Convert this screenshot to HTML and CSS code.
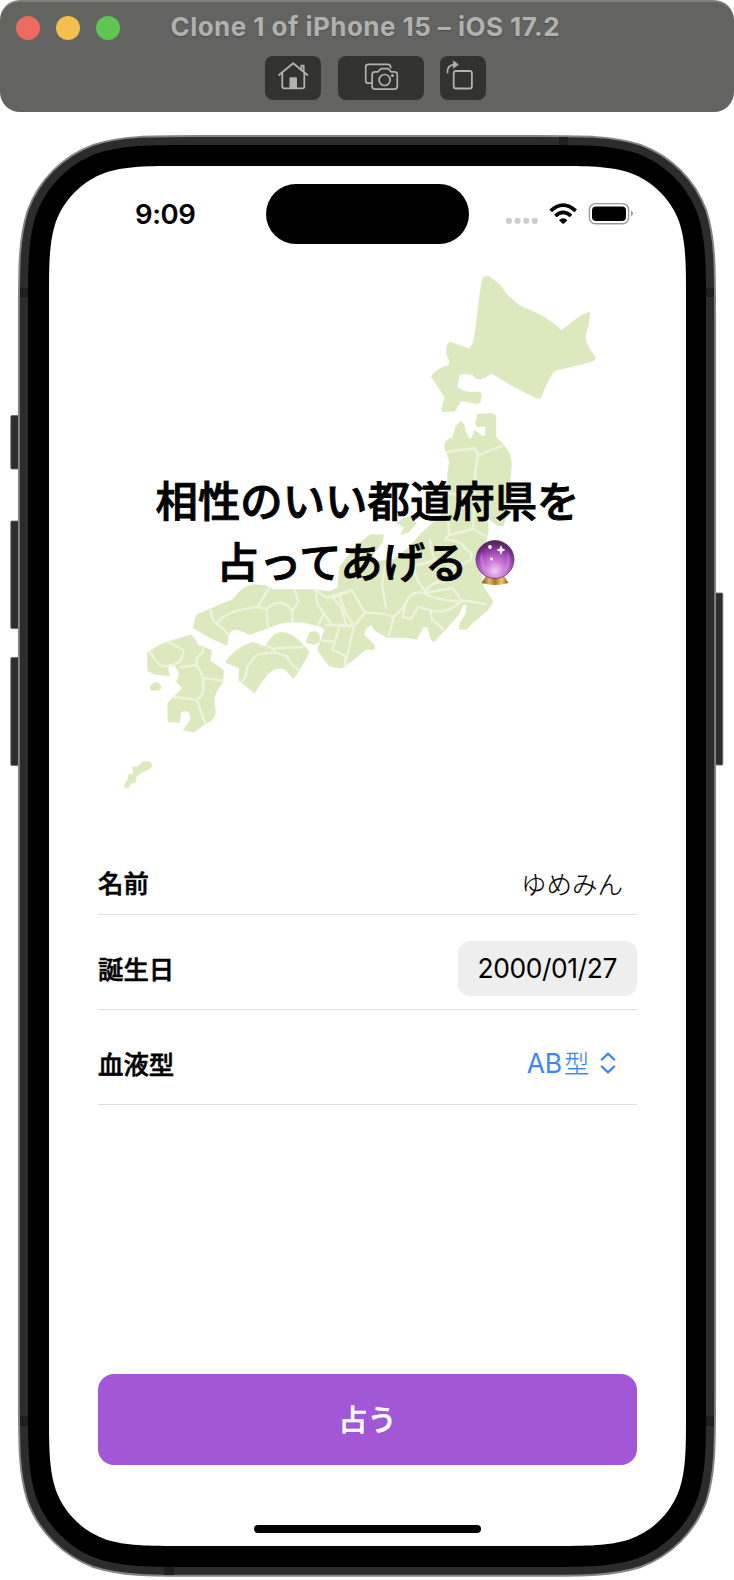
FILE: index.html
```html
<!DOCTYPE html>
<html lang="ja">
<head>
<meta charset="utf-8">
<title>Clone 1 of iPhone 15 – iOS 17.2</title>
<link rel="stylesheet" href="styles.css">
</head>
<body>
<header class="window-bar">
  <div class="title-row">
    <div class="lights"><i class="light red"></i><i class="light yellow"></i><i class="light green"></i></div>
    <h1 class="window-title">Clone 1 of iPhone 15 – iOS 17.2</h1>
  </div>
  <nav class="tools">
    <button class="tool home" aria-label="Home">
      <svg width="56" height="44" viewBox="0 0 56 44" fill="none" stroke="#b1b1af" stroke-width="1.8" stroke-linecap="round" stroke-linejoin="round"><path d="M14 19 28.2 7.2 42.4 19M17.3 17.2V30.5Q17.3 32.4 19.2 32.4H37.4Q39.3 32.4 39.3 30.5V17.2M36.3 13.2V9.7H38.7V15.5"/><path d="M24.5 32V22.5Q24.5 21.3 25.7 21.3H30.8Q32 21.3 32 22.5V32Z" fill="#b1b1af" stroke="none"/></svg>
    </button>
    <button class="tool camera" aria-label="Screenshot">
      <svg width="86" height="44" viewBox="0 0 86 44" fill="none" stroke="#b1b1af" stroke-width="1.7" stroke-linecap="round" stroke-linejoin="round"><path d="M33.5 27.2H30.5Q27.7 27.2 27.7 24.4V11Q27.7 8.3 30.5 8.3H50Q52.5 8.3 52.8 11.6"/><path d="M37 15.8H40.1L42 13.5Q42.7 12.7 43.8 12.7H49.3Q50.4 12.7 51.1 13.5L53 15.8H56.4Q59.3 15.8 59.3 18.7V30.3Q59.3 33.2 56.4 33.2H37Q34.1 33.2 34.1 30.3V18.7Q34.1 15.8 37 15.8Z"/><circle cx="46.6" cy="24" r="5.5"/><circle cx="54.4" cy="19.6" r="1.5" fill="#b1b1af" stroke="none"/></svg>
    </button>
    <button class="tool rotate" aria-label="Rotate">
      <svg width="46" height="44" viewBox="0 0 46 44" fill="none" stroke="#b1b1af" stroke-width="1.8" stroke-linecap="round" stroke-linejoin="round"><rect x="13.7" y="15" width="18.2" height="17.5" rx="2.3"/><path d="M7.5 16.5C7 11.5 9.5 9 14.5 8.6"/><path d="M13.7 5.3 18.3 8.6 13.7 12Z" fill="#b1b1af" stroke-width=".8"/></svg>
    </button>
  </nav>
</header>

<main class="device">
  <svg class="device-frame" width="734" height="1468" viewBox="0 112 734 1468" aria-hidden="true">
    <g fill="#2c2d2c" stroke="#6a6a6a" stroke-width=".8">
      <rect x="10.8" y="415.5" width="10" height="53.5" rx="1"/><rect x="10.8" y="521" width="10" height="107.5" rx="1"/><rect x="10.8" y="657.5" width="10" height="108" rx="1"/><rect x="713" y="593" width="9.8" height="172" rx="1"/>
    </g>
    <path fill="#2c2c2c" stroke="#858585" stroke-width="1.9" d="M199.3 136H534.7c52 0 77.9 0 105.9 8.8c30.5 11.2 54.5 35.2 65.7 65.7c8.8 28 8.8 53.9 8.8 105.9V1395.4c0 52 0 77.9-8.8 105.9c-11.2 30.5-35.2 54.5-65.7 65.7c-28 8.8-53.9 8.8-105.9 8.8H199.3c-52 0-77.9 0-105.9-8.8c-30.5-11.2-54.5-35.2-65.7-65.7c-8.8-28-8.8-53.9-8.8-105.9V316.4c0-52 0-77.9 8.8-105.9c11.2-30.5 35.2-54.5 65.7-65.7c28-8.8 53.9-8.8 105.9-8.8Z"/>
    <path fill="#1f1f1f" d="M559 137h9v9h-9zM164 1566h10v9h-10zM20 288h9v9h-9zM705 288h9v9h-9zM20 1416h9v10h-9zM705 1416h9v10h-9z"/>
    <path d="M196 145H538c48.3 0 72.5 0 98.5 8.2c28.5 10.4 50.9 32.8 61.3 61.3c8.2 26 8.2 50.2 8.2 98.5V1399c0 48.3 0 72.5-8.2 98.5c-10.4 28.5-32.8 50.9-61.3 61.3c-26 8.2-50.2 8.2-98.5 8.2H196c-48.3 0-72.5 0-98.5-8.2c-28.5-10.4-50.9-32.8-61.3-61.3c-8.2-26-8.2-50.2-8.2-98.5V313c0-48.3 0-72.5 8.2-98.5c10.4-28.5 32.8-50.9 61.3-61.3c26-8.2 50.2-8.2 98.5-8.2Z"/>
    <path fill="#fff" d="M185 166H550c39.1 0 58.7 0 79.8 6.7c23 8.3 41.2 26.5 49.5 49.5c6.7 21.1 6.7 40.7 6.7 79.8V1410c0 39.1 0 58.7-6.7 79.8c-8.3 23-26.5 41.2-49.5 49.5c-21.1 6.7-40.7 6.7-79.8 6.7H185c-39.1 0-58.7 0-79.8-6.7c-23-8.3-41.2-26.5-49.5-49.5c-6.7-21.1-6.7-40.7-6.7-79.8V302c0-39.1 0-58.7 6.7-79.8c8.3-23 26.5-41.2 49.5-49.5c21.1-6.7 40.7-6.7 79.8-6.7Z"/>
  </svg>

  <div class="screen">
    <div class="status">
      <span class="time">9:09</span>
      <div class="island"></div>
      <svg class="status-icons" width="130" height="24" viewBox="505 201 130 24">
        <g fill="#ccc"><rect x="506" y="217" width="5.8" height="5.8" rx="1.8"/><rect x="514.7" y="217" width="5.8" height="5.8" rx="1.8"/><rect x="523.3" y="217" width="5.8" height="5.8" rx="1.8"/><rect x="532" y="217" width="5.8" height="5.8" rx="1.8"/></g>
        <g fill="none" stroke="#000" stroke-width="3.7"><path d="M550.7 209.9Q563.2 198.3 575.7 209.9"/><path d="M555.4 215Q563.2 207.8 571 215"/></g>
        <path d="M559 219.2Q563.2 215.4 567.4 219.2L563.9 222.5Q563.2 223.1 562.5 222.5Z"/>
        <rect x="589.4" y="202.6" width="39.2" height="20.2" rx="6" fill="none" stroke="#999" stroke-width="1.4"/><rect x="592" y="205.4" width="34" height="14.6" rx="4"/><path fill="#999" d="M631 209.6q2 .8 2 3t-2 3Z"/>
      </svg>
    </div>

    <section class="hero">
      <svg class="map" width="500" height="540" viewBox="110 260 500 540" aria-hidden="true">
        <g fill="#dce9bf" stroke="#dce9bf" stroke-width="1.5" stroke-linejoin="round">
          <path transform="translate(400 260) scale(.33333)" d="M248 55Q258 42 274 54L298 72L323 106L360 138Q382 146 405 157Q448 176 484 211Q510 192 535 172Q557 158 570 156L566 190L557 225Q555 246 570 269L588 294Q583 304 560 309L465 332Q455 341 450 353L434 384L424 410Q415 421 402 411L344 382L274 340L255 353Q227 366 218 344Q195 339 178 344L172 380Q185 393 205 396L240 396L245 405L241 427L230 431L184 422L164 454L126 455L126 441L135 413L113 379L94 350Q105 331 130 321L148 315L149 304L138 279L141 256L149 245L207 266Q222 255 225 219L232 165L237 117Z"/>
          <path d="M460.7 421.7Q464 424 465 431L468 437Q471 440 472 438L475 431L484 437.5L486 434V426H477L476 423L478 414.5L493 414L495.5 416V437L503 445Q511 453 511 466Q510 480 507 491Q503 505 507 511L503 525Q498 527 493 521L487 518L488 531L484 548L480 565L483 587L492.7 602L487 610L473 622L466 629H460L460 624L467 613V604H463L458 615L447 627L434 641Q431 640 430.5 637L428 627L423 626L416.7 639L405 636.7L387 637L375 630L371.5 624L365 629L363.5 635L374 645L374 649H365L355 658L343 667Q335 668 329 665L318 650L325 630L322 626.5L303 621.7Q290 621 280 623L250 634L238 629Q230 629 228 635L226.7 645L210 637L193.5 627.7L197 615L233 600Q243 586 254 585L265 586L273 590H313L330 592L338 588L340 567L355 548L370 535L383 535L382 542L372 555L375 562L393 560L410 547L423 532L437 520L443 513L448 499V474L450 461L445 448Q444 440 453 438L456 427Z"/>
          <path d="M398 523L403 519L409 517L416 523L408 532L401 534L405 527Z"/>
          <path d="M310 633Q317 630 319 635V642L313 644L306.5 642Z"/>
          <path transform="translate(110 560) scale(.33333)" d="M112 278Q150 250 190 240L242 224Q260 238 263 255L305 270L301 303L341 330L338 370Q324 380 313 413L316 460L313 470Q306 484 285 492L252 517L219 511L240 483L241 465Q237 451 222 453Q211 456 211 462L210 487L174 486L173 429L217 384L199 365L207 347Q204 321 188 312Q174 311 174 324L178 348L132 343L113 332Z"/>
          <path transform="translate(110 560) scale(.33333)" d="M349 302Q371 267 428 246L465 260L480 238Q495 217 515 217Q550 218 582 258L599 276L585 300L567 332L550 357L525 328Q490 317 465 353Q446 375 434 400L386 361L388 324L349 309ZM120 380Q127 365 145 368Q158 375 150 389Q137 392 123 391ZM98 605Q111 601 121 607Q130 615 121 625L92 640L79 650L76 667L62 671L55 683L44 682L45 671L54 657V646L70 640L68 620L81 622Z"/>
        </g>
        <g fill="none" stroke="#edf3dc" stroke-width="2.4" stroke-linejoin="round" stroke-linecap="round">
          <path d="M447 452L475 448L478 455L502 446M478 455L475 473V493M448 493L473 498L488 493M475 493L473 529L450 535M448 500L449 535L445 540M473 529L485 536"/>
          <path d="M448 540Q462 541 465 548Q473 552 471 560L460 565Q450 567 452 574L445 582M445 582Q432 580 424 593M430 540Q431 555 436 560L414 566Q416 580 421 585L426 593Q440 590 453 588L461 600L485 604M424 593Q410 590 405 605L403 617L411 619L418 607L430 610Q442 614 452 608L462 601M424 593Q434 600 458 601M430 610L432 619L443 629M405 605L394 617L389 635M394 617Q380 612 365 613Q360 605 352 590L339 594L327 598L315 590M385 566L382 585L386 608M365 613L354 626L345 665M354 626Q340 624 326 625M339 594L345 612L354 626"/>
          <path stroke-width="7" transform="translate(110 560) scale(.33333)" d="M303 152Q302 178 320 190L355 222M320 190L338 172Q376 147 442 141L475 88M442 141L469 147L474 200M469 147Q499 122 520 130Q537 137 547 151V185M547 151L566 126L554 92M618 92L622 131L642 160L625 196M642 160L667 196L720 200M667 112L691 139L710 196M687 205L667 270L707 287L704 320M667 243H640M667 112L720 94M177 247L220 270Q221 306 187 315M120 277L140 306Q157 325 177 316M282 259L277 279Q255 290 261 316L277 347L281 385L274 408L260 420L195 411M261 316L211 321M282 354L338 362M260 420L286 491M473 258Q495 268 497 277Q440 279 435 291L411 320Q411 352 396 364M497 264L577 262M497 277L532 289Q537 310 567 331"/>
        </g>
      </svg>
      <h2 class="headline">相性のいい都道府県を<br>占ってあげる<svg class="crystal" role="img" aria-label="🔮" width="44" height="48" viewBox="0 0 44 48">
        <defs><radialGradient id="ball" cx=".5" cy=".8" r=".78"><stop offset="0" stop-color="#efd0f4"/><stop offset=".3" stop-color="#cf82da"/><stop offset=".62" stop-color="#a349b8"/><stop offset=".85" stop-color="#6c2b7a"/><stop offset="1" stop-color="#4e2558"/></radialGradient><linearGradient id="base"><stop stop-color="#795015"/><stop offset=".3" stop-color="#e3bc65"/><stop offset=".5" stop-color="#a77526"/><stop offset=".75" stop-color="#f0cb6d"/><stop offset="1" stop-color="#855713"/></linearGradient></defs>
        <path d="M13 37Q22 41 31 37L35.5 44Q22 48 8.5 44Z" fill="url(#base)"/><circle cx="22" cy="20.5" r="19" fill="url(#ball)" stroke="#62356f" stroke-width=".8"/><path d="M10 31Q5 22 9 13Q10 25 15 34ZM34 31Q40 21 34 12Q36 24 29 34Z" fill="#e1aaf0" opacity=".35"/><path d="m28 6 1.2 3.3L32.5 11l-3.3 1.4L28 16l-1.4-3.6L23.3 11l3.3-1.5Z" fill="#fff"/><circle cx="17" cy="8" r="1.9" fill="#fff"/><circle cx="18.5" cy="20" r="1.5" fill="#fff"/>
      </svg></h2>
    </section>

    <form class="form">
      <div class="field name"><span class="label">名前</span><span class="value">ゆめみん</span></div>
      <div class="field"><span class="label">誕生日</span><span class="date">2000/01/27</span></div>
      <div class="field"><span class="label">血液型</span><span class="blood"><span class="blood-type">AB<span class="kanji">型</span></span><svg width="16" height="24" viewBox="0 0 16 24" fill="none" stroke="#3d85f7" stroke-width="2.3" stroke-linecap="round" stroke-linejoin="round"><path d="M1.8 8.5 8 2.6 14.2 8.5M1.8 15.5 8 21.4 14.2 15.5"/></svg></span></div>
    </form>
    <button class="submit">占う</button>
    <div class="home-indicator"></div>
  </div>
</main>
</body>
</html>
```
FILE: styles.css
```css
* { box-sizing: border-box; }
body { margin: 0; width: 734px; height: 1580px; overflow: hidden; background: #fff; color: #000; font-family: Inter, "Noto Sans CJK JP", sans-serif; }
button { border: 0; padding: 0; font-family: inherit; }
.window-bar { height: 112px; border-radius: 20px; background: #636361; border-top: 2px solid #81817f; }
.title-row { display: grid; grid-template-columns: 170.5px 1fr; align-items: center; height: 52px; }
.lights { display: flex; gap: 16px; padding-left: 16px; }
.light { width: 24px; height: 24px; border-radius: 50%; }
.red { background: #ed6a5e; }
.yellow { background: #f5bf4f; }
.green { background: #61c554; }
.window-title { margin: 0 0 2px; font-size: 26px; line-height: 30px; font-weight: 700; letter-spacing: .46px; color: #b1b1af; white-space: nowrap; text-shadow: 0 1px 1px #4b4b49; }
.tools { display: flex; padding: 2px 0 0 265px; }
.tool { height: 44px; border-radius: 8px; background: #323230; }
.tool svg { display: block; }
.home { width: 56px; }
.camera { width: 86px; margin-left: 17px; }
.rotate { width: 46px; margin-left: 16px; }
.device { position: relative; height: 1468px; padding: 54px 48px 34px 49px; }
.device-frame { position: absolute; inset: 0; }
.screen { position: relative; display: flex; flex-direction: column; align-items: center; height: 1380px; padding: 18px 49px 13px; }
.status { display: grid; grid-template-columns: 168px 203px 168px; align-items: center; height: 60px; flex: none; }
.time { justify-self: start; padding-left: 37px; font-size: 27.5px; font-weight: 600; letter-spacing: -.4px; }
.island { width: 203px; height: 60px; border-radius: 30px; background: #000; }
.status-icons { margin-left: 36px; }
.hero { display: grid; justify-items: center; align-items: center; width: 539px; height: 540px; margin-top: 16px; flex: none; }
.map, .headline { grid-area: 1 / 1; }
.map { justify-self: start; margin-left: 12px; }
.headline { position: relative; margin: 4px 0 0; font-size: 42.4px; line-height: 61px; font-weight: 500; -webkit-text-stroke: .9px; text-align: center; white-space: nowrap; }
.crystal { display: inline-block; margin: 0 1px 0 6px; vertical-align: -9px; }
.form { width: 539px; margin-top: 54px; }
.field { display: flex; justify-content: space-between; align-items: center; height: 95px; padding-top: 12px; border-bottom: 1px solid #dedede; }
.name { height: 61px; padding: 0 0 4px; }
.label { font-size: 25.4px; font-weight: 500; -webkit-text-stroke: .55px; }
.value { padding-right: 14px; font-size: 25.5px; font-weight: 300; -webkit-text-stroke: .15px; }
.date { display: grid; place-items: center; width: 179.5px; height: 55px; border-radius: 12px; background: #eee; font-size: 26.4px; letter-spacing: -.4px; }
.blood { display: flex; align-items: center; gap: 11px; padding-right: 21px; color: #3d85f7; font-size: 26.4px; }
.blood-type { padding-bottom: 2px; letter-spacing: -.2px; }
.kanji { margin-left: 2px; font-size: 25.3px; font-weight: 300; -webkit-text-stroke: .15px; }
.submit { width: 539px; height: 91px; margin-top: 269px; padding-bottom: 4px; border-radius: 16px; background: #a257d7; color: #fff; font-size: 29px; font-weight: 500; -webkit-text-stroke: .5px; flex: none; }
.home-indicator { width: 227px; height: 8px; margin-top: auto; border-radius: 4px; background: #000; }
```
